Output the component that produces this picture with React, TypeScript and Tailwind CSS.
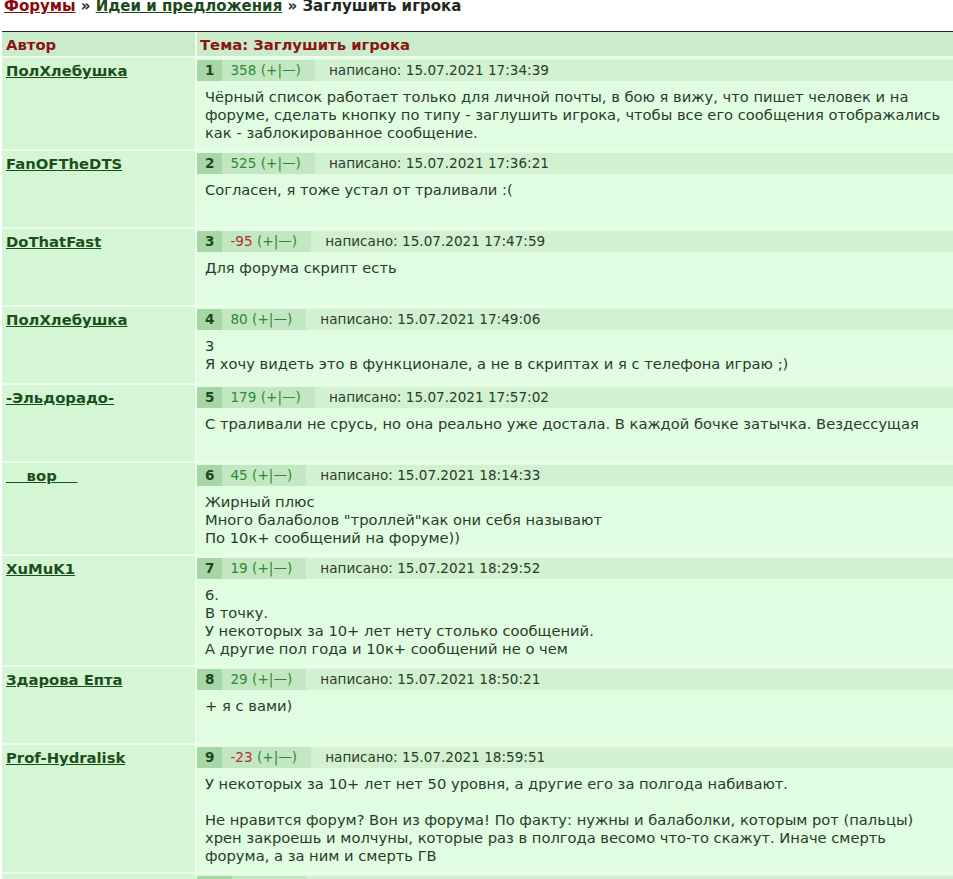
import React from "react";

type Post = {
  n: number;
  author: string;
  rating: number;
  date: string;
  text: string;
};

const posts: Post[] = [
  {
    n: 1,
    author: "ПолХлебушка",
    rating: 358,
    date: "15.07.2021 17:34:39",
    text: "Чёрный список работает только для личной почты, в бою я вижу, что пишет человек и на форуме, сделать кнопку по типу - заглушить игрока, чтобы все его сообщения отображались как - заблокированное сообщение.",
  },
  { n: 2, author: "FanOFTheDTS", rating: 525, date: "15.07.2021 17:36:21", text: "Согласен, я тоже устал от траливали :(" },
  { n: 3, author: "DoThatFast", rating: -95, date: "15.07.2021 17:47:59", text: "Для форума скрипт есть" },
  {
    n: 4,
    author: "ПолХлебушка",
    rating: 80,
    date: "15.07.2021 17:49:06",
    text: "3\nЯ хочу видеть это в функционале, а не в скриптах и я с телефона играю ;)",
  },
  {
    n: 5,
    author: "-Эльдорадо-",
    rating: 179,
    date: "15.07.2021 17:57:02",
    text: "С траливали не срусь, но она реально уже достала. В каждой бочке затычка. Вездессущая",
  },
  {
    n: 6,
    author: "\u00a0\u00a0\u00a0\u00a0вор\u00a0\u00a0\u00a0\u00a0",
    rating: 45,
    date: "15.07.2021 18:14:33",
    text: "Жирный плюс\nМного балаболов \"троллей\"как они себя называют\nПо 10к+ сообщений на форуме))",
  },
  {
    n: 7,
    author: "XuMuK1",
    rating: 19,
    date: "15.07.2021 18:29:52",
    text: "6.\nВ точку.\nУ некоторых за 10+ лет нету столько сообщений.\nА другие пол года и 10к+ сообщений не о чем",
  },
  { n: 8, author: "Здарова Епта", rating: 29, date: "15.07.2021 18:50:21", text: "+ я с вами)" },
  {
    n: 9,
    author: "Prof-Hydralisk",
    rating: -23,
    date: "15.07.2021 18:59:51",
    text: "У некоторых за 10+ лет нет 50 уровня, а другие его за полгода набивают.\n\nНе нравится форум? Вон из форума! По факту: нужны и балаболки, которым рот (пальцы) хрен закроешь и молчуны, которые раз в полгода весомо что-то скажут. Иначе смерть форума, а за ним и смерть ГВ",
  },
  { n: 10, author: "", rating: 0, date: "", text: "" },
];

function Row({ p }: { p: Post }) {
  return (
    <div className="flex gap-[2px] min-h-[76px]">
      <div className="w-[193px] shrink-0 bg-[#d5f6d5] pl-[4px] pt-[1px]">
        <a className="font-bold underline text-[#1b4f1b] text-[14.8px] leading-[18px] whitespace-pre">{p.author}</a>
      </div>
      <div className="flex-1 bg-[#e1fde1] pt-[2px] flex flex-col">
        <div className="flex h-[21px] items-center bg-[#d1f1d1] text-[13.6px] leading-[21px]">
          <div className="h-full bg-[#a7d6a7] px-[8px] font-bold text-[#1d4a1d]">{p.n}</div>
          <div className="h-full bg-[#c3e7c3] pl-[8px] pr-[14px] text-[#2f8a2f] whitespace-pre">
            <span className={p.rating < 0 ? "text-[#b03030]" : "text-[#2f8a2f]"}>{p.rating}</span> (+|—)
          </div>
          <div className="pl-[14px] text-[#2c3a2c]">{p.date ? "написано: " + p.date : ""}</div>
        </div>
        <div className="pt-[7px] pb-[7px] pl-[8px] pr-[8px] text-[14.7px] leading-[18px] text-[#2a3b2a] whitespace-pre-line">
          {p.text}
        </div>
      </div>
    </div>
  );
}

export default function App() {
  return (
    <div
      className="w-[953px] h-[879px] overflow-hidden bg-white"
      style={{ fontFamily: '"DejaVu Sans", Verdana, sans-serif' }}
    >
      <div className="h-[31px] pl-[4px] text-[15px] leading-[13px] font-bold text-[#1f2a1f]">
        <a className="underline text-[#8b0a0a]">Форумы</a> » <a className="underline text-[#1b4a1b]">Идеи и предложения</a> » Заглушить игрока
      </div>
      <div className="ml-[2px] border-t border-[#1c2b1c] bg-[#ecfdec] flex flex-col gap-[2px]">
        <div className="flex gap-[2px] h-[24px] text-[14.8px] font-bold text-[#8b1414] leading-[26px]">
          <div className="w-[193px] shrink-0 bg-[#caecca] pl-[4px]">Автор</div>
          <div className="flex-1 bg-[#caecca] pl-[3px]">Тема: Заглушить игрока</div>
        </div>
        {posts.map((p) => (
          <Row key={p.n} p={p} />
        ))}
      </div>
    </div>
  );
}
